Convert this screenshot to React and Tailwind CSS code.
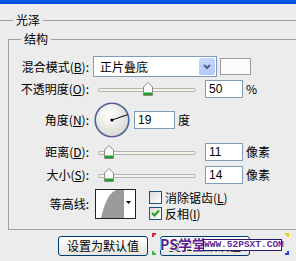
import React from "react";

const Thumb = ({ left }) => (
  <svg
    className="absolute top-0"
    style={{ left }}
    width="10"
    height="14"
    viewBox="0 0 10 14"
  >
    <path d="M0.5,5 L5,0.5 L9.5,5 L9.5,13.5 L0.5,13.5 Z" fill="#fbfbf8" stroke="#8b8b86" />
    <rect x="1" y="10.5" width="8" height="2.5" fill="#21a121" />
  </svg>
);

const Slider = ({ pos }) => (
  <div className="relative w-[98px] h-[14px] ml-[9px]">
    <div className="absolute left-0 right-0 top-[6px] h-[4px] rounded-full border border-[#b4b3ab] bg-[#f4f3ee]" />
    <Thumb left={pos} />
  </div>
);

const Field = ({ value, className = "" }) => (
  <div
    className={
      "h-[18px] border border-[#7f9db9] bg-white pl-[3px] text-[12px] leading-[16px] font-['Liberation_Sans',sans-serif] " +
      className
    }
  >
    {value}
  </div>
);

const Label = ({ children }) => (
  <div className="w-[80px] shrink-0 text-right whitespace-nowrap">{children}</div>
);

const Check = ({ checked }) => (
  <div className="w-[13px] h-[13px] border border-[#1c5180] bg-gradient-to-br from-[#dcdcd7] to-white flex items-center justify-center">
    {checked && (
      <svg width="9" height="9" viewBox="0 0 9 9">
        <path d="M1,4 L3.5,6.5 L8,1.5" fill="none" stroke="#21a121" strokeWidth="2" />
      </svg>
    )}
  </div>
);

const Corner = ({ className }) => <div className={"absolute w-[4px] h-[4px] " + className} />;

export default function App() {
  return (
    <div className="w-[296px] h-[261px] overflow-hidden bg-[#ececec] text-black text-[12px] leading-[14px] font-['Noto_Sans_CJK_SC',sans-serif]">
      <div className="h-[4px] bg-gradient-to-b from-[#0a5fe8] to-[#0046d5]" />

      {/* 光泽 */}
      <div className="flex items-center h-[14px] mt-[9px]">
        <div className="w-[13px] h-px bg-[#a0a0a0]" />
        <span className="px-[3px]">光泽</span>
        <div className="flex-1 h-px bg-[#a0a0a0]" />
      </div>

      {/* 结构 */}
      <div className="flex flex-col ml-[8px] mr-[-20px] mt-[12px] border-l border-b border-[#a0a0a0] pb-[10px]">
        <div className="flex items-center h-[14px] -mt-[7px]">
          <div className="w-[12px] h-px bg-[#a0a0a0]" />
          <span className="px-[3px]">结构</span>
          <div className="flex-1 h-px bg-[#a0a0a0]" />
        </div>

        {/* 混合模式 */}
        <div className="flex items-center h-[21px] mt-[10px]">
          <Label>
            混合模式(<u>B</u>):
          </Label>
          <div className="ml-[4px] w-[124px] h-[21px] border border-[#7f9db9] bg-white flex items-center">
            <span className="pl-[6px] flex-1">正片叠底</span>
            <div className="w-[16px] h-[17px] mr-[1px] rounded-[2px] bg-gradient-to-b from-[#c8d8fb] to-[#b4c8f6] flex items-center justify-center">
              <svg width="8" height="6" viewBox="0 0 8 6">
                <path d="M1,1 L4,4 L7,1" fill="none" stroke="#4d6185" strokeWidth="2" />
              </svg>
            </div>
          </div>
          <div className="ml-[3px] w-[31px] h-[17px] border border-[#9c9c9c] bg-[#fdfbfb]" />
        </div>

        {/* 不透明度 */}
        <div className="flex items-center h-[18px] mt-[3px]">
          <Label>
            不透明度(<u>O</u>):
          </Label>
          <Slider pos={45} />
          <Field value="50" className="ml-[9px] w-[38px]" />
          <span className="ml-[3px]">%</span>
        </div>

        {/* 角度 */}
        <div className="flex items-center h-[36px] mt-[4px]">
          <Label>
            角度(<u>N</u>):
          </Label>
          <svg className="ml-[5px]" width="36" height="36" viewBox="0 0 36 36">
            <defs>
              <radialGradient id="dial" cx="40%" cy="35%" r="70%">
                <stop offset="0%" stopColor="#ffffff" />
                <stop offset="100%" stopColor="#d6d6d2" />
              </radialGradient>
            </defs>
            <circle cx="18" cy="18" r="16.8" fill="url(#dial)" stroke="#4e6592" strokeWidth="1.6" />
            <line x1="18" y1="18" x2="33.8" y2="12.6" stroke="#000" strokeWidth="1" />
            <circle cx="18" cy="18" r="1.6" fill="#000" />
          </svg>
          <Field value="19" className="ml-[4px] w-[41px]" />
          <span className="ml-[3px]">度</span>
        </div>

        {/* 距离 */}
        <div className="flex items-center h-[18px] mt-[5px]">
          <Label>
            距离(<u>D</u>):
          </Label>
          <Slider pos={6} />
          <Field value="11" className="ml-[9px] w-[38px]" />
          <span className="ml-[3px]">像素</span>
        </div>

        {/* 大小 */}
        <div className="flex items-center h-[18px] mt-[5px]">
          <Label>
            大小(<u>S</u>):
          </Label>
          <Slider pos={6} />
          <Field value="14" className="ml-[9px] w-[38px]" />
          <span className="ml-[3px]">像素</span>
        </div>

        {/* 等高线 */}
        <div className="flex items-start h-[30px] mt-[5px]">
          <div className="w-[80px] shrink-0 text-right h-[30px] flex items-center justify-end">等高线:</div>
          <svg className="ml-[6px]" width="41" height="30" viewBox="0 0 41 30">
            <rect x="0.5" y="0.5" width="40" height="29" fill="#fff" stroke="#222" />
            <path d="M6,29 C9,18 12,5 21,1 L29,1 L29,29 Z" fill="#9a9a9a" />
            <path d="M31,12 L36,12 L33.5,15 Z" fill="#000" />
          </svg>
          <div className="ml-[13px] mt-[2px] flex flex-col gap-[3px]">
            <div className="flex items-center gap-[3px] h-[13px]">
              <Check />
              <span>
                消除锯齿(<u>L</u>)
              </span>
            </div>
            <div className="flex items-center gap-[3px] h-[13px]">
              <Check checked />
              <span>
                反相(<u>I</u>)
              </span>
            </div>
          </div>
        </div>
      </div>

      {/* buttons */}
      <div className="relative flex items-center pl-[58px] mt-[6px]">
        <button className="w-[90px] h-[20px] rounded-[3px] border border-[#003c74] bg-gradient-to-b from-white to-[#e6e5df] text-[12px] leading-[14px]">
          设置为默认值
        </button>
        <button className="ml-[12px] w-[90px] h-[20px] rounded-[3px] border border-[#003c74] bg-gradient-to-b from-white to-[#e6e5df] text-[12px] leading-[14px]">
          复位为默认值
        </button>

        {/* watermark */}
        <div className="absolute left-[152px] top-[-3px] w-[137px] h-[22px]">
          <Corner className="left-0 top-0 border-l-2 border-t-2 border-[#e0202a]" />
          <Corner className="right-0 top-0 border-r-2 border-t-2 border-[#f0d000]" />
          <Corner className="left-0 bottom-0 border-l-2 border-b-2 border-[#30c030]" />
          <Corner className="right-0 bottom-0 border-r-2 border-b-2 border-[#2040e0]" />
          <span className="absolute left-[8px] top-[3px] text-[14px] leading-[16px] font-bold text-[#5b1c8c] [text-shadow:1px_0_#fff,-1px_0_#fff,0_1px_#fff,0_-1px_#fff]">
            PS学堂
          </span>
          <span className="absolute left-[51px] top-[6px] h-[12px] w-[79px] border border-[#2a1a66] bg-white text-[9.5px] leading-[10px] font-bold text-[#5a2a9a] font-['Liberation_Mono',monospace] text-center">
            WWW.52PSXT.COM
          </span>
        </div>
      </div>
    </div>
  );
}
